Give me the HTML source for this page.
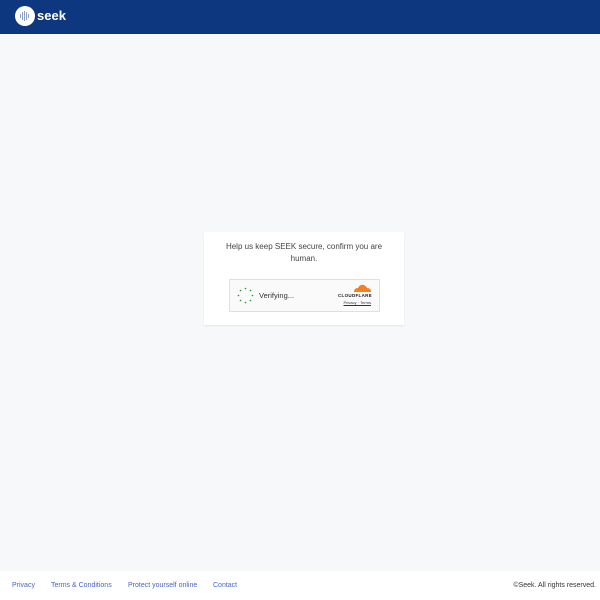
<!DOCTYPE html>
<html><head><style>
body{margin:0;width:600px;height:600px;background:#f7f8fa;font-family:"Liberation Sans",sans-serif;position:relative;overflow:hidden}
.hdr{position:absolute;top:0;left:0;width:600px;height:34px;background:#0d3880}
.logo{position:absolute;left:15px;top:6px;width:20px;height:20px;border-radius:50%;background:#fff}
.lt{position:absolute;left:37px;top:8px;color:#fff;font-weight:bold;font-size:13px}
.card{position:absolute;left:204px;top:232px;width:200px;height:93px;background:#fff;box-shadow:0 1px 2px rgba(0,0,0,.08)}
.msg{position:absolute;top:9px;left:0;width:200px;text-align:center;font-size:8px;line-height:12px;color:#444}
.w{position:absolute;left:25px;top:47px;width:149px;height:31px;background:#fafafa;border:1px solid #e0e0e0}
.ver{position:absolute;left:29px;top:11px;font-size:7.5px;color:#333}
.cf{position:absolute;right:7px;top:13px;font-size:4.5px;font-weight:bold;letter-spacing:.3px;color:#222}
.pt{position:absolute;right:8px;top:20px;font-size:4px;color:#333;text-decoration:underline}
.ft{position:absolute;top:571px;left:0;width:600px;height:29px;background:#fff;font-size:7px}
.ft a{position:absolute;top:11px;color:#4a62c8;text-decoration:none}
</style></head><body>
<div class="hdr"><div class="logo"><svg width="20" height="20"><g fill="#8aa0c8"><rect x="5" y="8" width="1" height="4"/><rect x="7" y="6" width="1" height="8"/><rect x="9" y="5" width="1" height="10"/><rect x="11" y="6" width="1" height="8"/><rect x="13" y="8" width="1" height="4"/></g></svg></div><div class="lt">seek</div></div>
<div class="card"><div class="msg">Help us keep SEEK secure, confirm you are<br>human.</div>
<div class="w"><svg style="position:absolute;left:7px;top:7px" width="17" height="17"><g fill="#2a8a3a"><circle cx="8.5" cy="1.5" r=".8"/><circle cx="13.5" cy="3.5" r=".8"/><circle cx="15.5" cy="8.5" r=".8"/><circle cx="13.5" cy="13.5" r=".8"/><circle cx="8.5" cy="15.5" r=".8"/><circle cx="3.5" cy="13.5" r=".8"/><circle cx="1.5" cy="8.5" r=".8"/><circle cx="3.5" cy="3.5" r=".8"/></g></svg>
<div class="ver">Verifying...</div>
<svg style="position:absolute;right:7px;top:3px" width="20" height="10"><path d="M2 9 Q2 5 6 5 Q8 1 12 2 Q14 3 15 5 Q19 5 19 9Z" fill="#f48120"/></svg>
<div class="cf">CLOUDFLARE</div><div class="pt">Privacy · Terms</div></div></div>
<div class="ft"><a style="left:12px">Privacy</a><a style="left:51px">Terms &amp; Conditions</a><a style="left:128px">Protect yourself online</a><a style="left:213px">Contact</a><span style="position:absolute;right:4px;top:11px;color:#333">©Seek. All rights reserved.</span></div>
</body></html>
